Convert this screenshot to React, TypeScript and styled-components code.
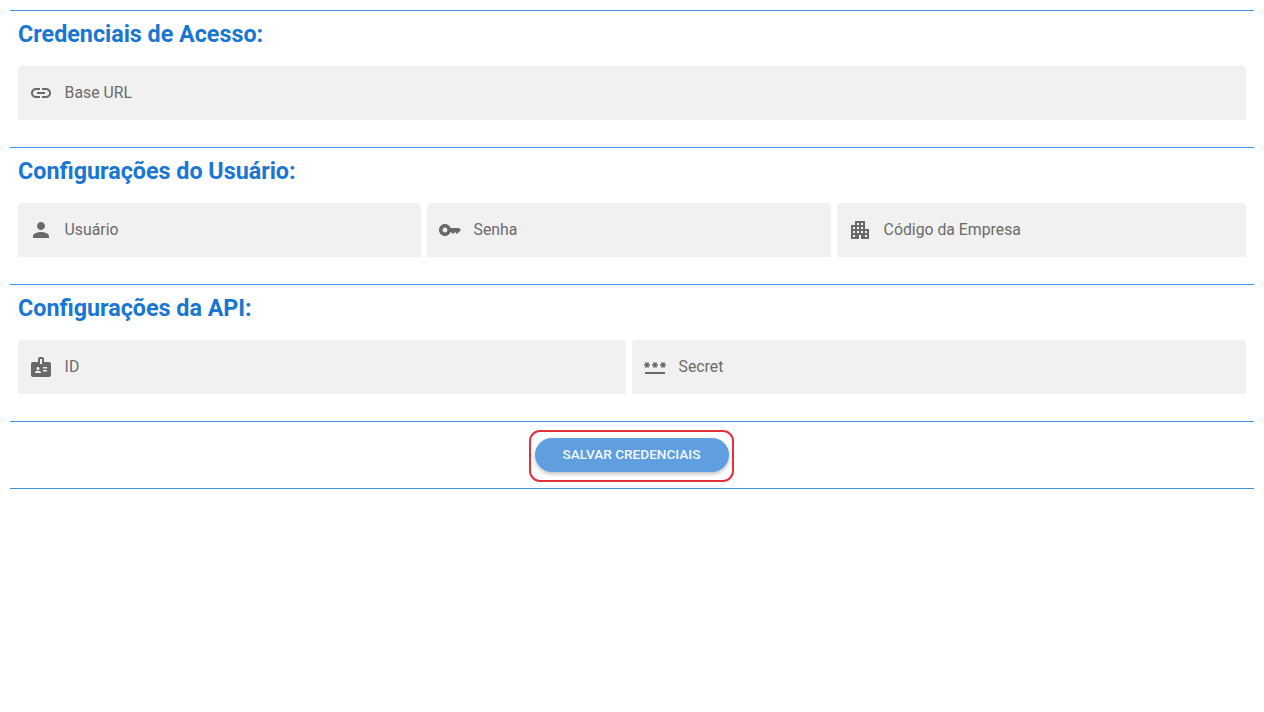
import React from "react";
import styled, { createGlobalStyle } from "styled-components";

const icons = {
  link: "M3.9 12c0-1.71 1.39-3.1 3.1-3.1h4V7H7c-2.76 0-5 2.24-5 5s2.24 5 5 5h4v-1.9H7c-1.71 0-3.1-1.39-3.1-3.1zM8 13h8v-2H8v2zm9-6h-4v1.9h4c1.71 0 3.1 1.39 3.1 3.1s-1.39 3.1-3.1 3.1h-4V17h4c2.76 0 5-2.24 5-5s-2.24-5-5-5z",
  person:
    "M12 12c2.21 0 4-1.79 4-4s-1.79-4-4-4-4 1.79-4 4 1.79 4 4 4zm0 2c-2.67 0-8 1.34-8 4v2h16v-2c0-2.66-5.33-4-8-4z",
  key: "M21 10h-8.35C11.83 7.67 9.61 6 7 6c-3.31 0-6 2.69-6 6s2.69 6 6 6c2.61 0 4.83-1.67 5.65-4H13l2 2 2-2 2 2 4-4.04L21 10zM7 14.4c-1.32 0-2.4-1.08-2.4-2.4s1.08-2.4 2.4-2.4 2.4 1.08 2.4 2.4-1.08 2.4-2.4 2.4z",
  apartment:
    "M17 11V3H7v4H3v14h8v-4h2v4h8V11h-4zM7 19H5v-2h2v2zm0-4H5v-2h2v2zm0-4H5V9h2v2zm4 4H9v-2h2v2zm0-4H9V9h2v2zm0-4H9V5h2v2zm4 8h-2v-2h2v2zm0-4h-2V9h2v2zm0-4h-2V5h2v2zm4 12h-2v-2h2v2zm0-4h-2v-2h2v2z",
  badge:
    "M20 7h-5V4c0-1.1-.9-2-2-2h-2c-1.1 0-2 .9-2 2v3H4c-1.1 0-2 .9-2 2v11c0 1.1.9 2 2 2h16c1.1 0 2-.9 2-2V9c0-1.1-.9-2-2-2zM9 12c.83 0 1.5.67 1.5 1.5S9.83 15 9 15s-1.5-.67-1.5-1.5S8.17 12 9 12zm3 6H6v-.75c0-1 2-1.5 3-1.5s3 .5 3 1.5V18zm1-9h-2V4h2v5zm5 7.5h-4V15h4v1.5zm0-3h-4V12h4v1.5z",
  password:
    "M2 17h20v2H2v-2zm1.15-4.05L4 11.47l.85 1.48 1.3-.75-.85-1.48H7v-1.5H5.3l.85-1.47L4.85 7 4 8.47 3.15 7l-1.3.75.85 1.47H1v1.5h1.7l-.85 1.48 1.3.75zm6.7-.75 1.3.75.85-1.48.85 1.48 1.3-.75-.85-1.48H15v-1.5h-1.7l.85-1.47-1.3-.75L12 8.47 11.15 7l-1.3.75.85 1.47H9v1.5h1.7l-.85 1.48zM23 9.22h-1.7l.85-1.47-1.3-.75L20 8.47 19.15 7l-1.3.75.85 1.47H17v1.5h1.7l-.85 1.48 1.3.75.85-1.48.85 1.48 1.3-.75-.85-1.48H23v-1.5z",
};

const Field = ({ icon, label }: { icon: keyof typeof icons; label: string }) => (
  <FieldBox>
    <Icon viewBox="0 0 24 24">
      <path d={icons[icon]} />
    </Icon>
    <FieldLabel>{label}</FieldLabel>
  </FieldBox>
);

export default function App() {
  return (
    <>
      <GlobalStyle />
      <Page>
        <Section>
          <Title>Credenciais de Acesso:</Title>
          <Row $columns="1fr">
            <Field icon="link" label="Base URL" />
          </Row>
        </Section>
        <Section>
          <Title>Configurações do Usuário:</Title>
          <Row $columns="403fr 404fr 409fr">
            <Field icon="person" label="Usuário" />
            <Field icon="key" label="Senha" />
            <Field icon="apartment" label="Código da Empresa" />
          </Row>
        </Section>
        <Section>
          <Title>Configurações da API:</Title>
          <Row $columns="608fr 614fr">
            <Field icon="badge" label="ID" />
            <Field icon="password" label="Secret" />
          </Row>
        </Section>
        <Footer>
          <Highlight>
            <SaveButton>Salvar credenciais</SaveButton>
          </Highlight>
        </Footer>
      </Page>
    </>
  );
}

const GlobalStyle = createGlobalStyle`
html, body {
  margin: 0;
  padding: 0;
  background: #fff;
}

body {
  font-family: Roboto, "Liberation Sans", sans-serif;
}
`;

const Page = styled.div`
  padding: 10px 10px 0;
`;

const Section = styled.section`
  border-top: 1px solid #3f93e6;
  padding: 9px 8px 27px;
`;

const Title = styled.h2`
  margin: 0 0 18px;
  font-size: 23.3px;
  line-height: 28px;
  font-weight: 700;
  color: #1976d2;
`;

const Row = styled.div<{ $columns: string }>`
  display: grid;
  grid-template-columns: ${({ $columns }) => $columns};
  gap: 6px;
`;

const FieldBox = styled.div`
  display: flex;
  align-items: center;
  gap: 11.6px;
  height: 54px;
  padding: 0 11px 1px;
  box-sizing: border-box;
  background: #f1f1f1;
  border-radius: 4px 4px 0 0;
`;

const Icon = styled.svg`
  width: 24px;
  height: 24px;
  flex: none;
  fill: #696969;
`;

const FieldLabel = styled.span`
  font-size: 15.8px;
  color: #6b6b6b;
`;

const Footer = styled.div`
  display: flex;
  justify-content: center;
  border-top: 1px solid #3f93e6;
  border-bottom: 1px solid #3f93e6;
  padding: 8px 0 6px;
`;

const Highlight = styled.div`
  display: flex;
  margin-right: 2px;
  padding: 6px 3px 8px 4px;
  border: 2px solid #e2333a;
  border-radius: 11px;
`;

const SaveButton = styled.button`
  width: 194px;
  height: 34px;
  padding: 0 0 2px;
  border: 0;
  border-radius: 17px;
  background: #5f9fe0;
  color: rgba(255, 255, 255, 0.94);
  font-family: inherit;
  font-size: 13.6px;
  font-weight: 500;
  text-transform: uppercase;
  box-shadow: 0 2px 4px rgba(0, 0, 0, 0.25);
`;
